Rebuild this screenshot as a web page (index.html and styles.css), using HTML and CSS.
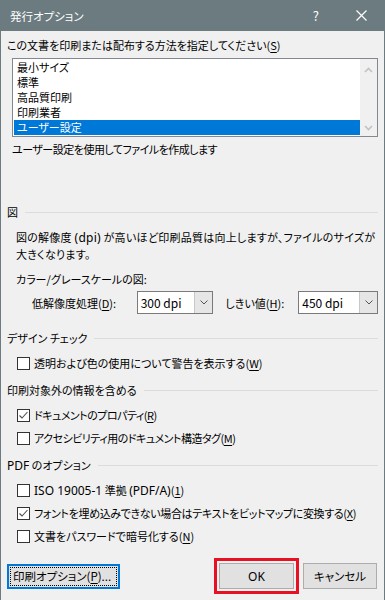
FILE: index.html
```html
<!DOCTYPE html>
<html>
  <head>
    <title>発行オプション</title>
    <link rel="stylesheet" href="styles.css">
  </head>
  <body>
    <div class="dialog">
      <div class="titlebar">
        <span class="title">発行オプション</span>
        <span class="help">?</span>
        <svg class="close" width="11" height="11" viewBox="0 0 11 11">
          <path d="M0.5 0.5 L10.5 10.5 M10.5 0.5 L0.5 10.5" stroke="#fff" stroke-width="1.2" fill="none" />
        </svg>
      </div>

      <div class="content">
        <div class="prompt">この文書を印刷または配布する方法を指定してください(<u>S</u>)</div>
        <div class="listbox">
          <ul class="items">
            <li>最小サイズ</li>
            <li>標準</li>
            <li>高品質印刷</li>
            <li>印刷業者</li>
            <li class="selected">ユーザー設定</li>
          </ul>
          <div class="scrollbar">
            <svg width="9" height="6" viewBox="0 0 9 6"><path d="M1 5 L4.5 1.5 L8 5" stroke="#c2c2c2" stroke-width="1.6" fill="none" /></svg>
            <svg width="9" height="6" viewBox="0 0 9 6"><path d="M1 1 L4.5 4.5 L8 1" stroke="#c2c2c2" stroke-width="1.6" fill="none" /></svg>
          </div>
        </div>
        <div class="desc">ユーザー設定を使用してファイルを作成します</div>

        <!-- 図 -->
        <div class="group-head first"><span>図</span></div>
        <p class="note">図の解像度 <span class="lat">(dpi)</span> が高いほど印刷品質は向上しますが、ファイルのサイズが<br>大きくなります。</p>
        <div class="sub">カラー/グレースケールの図:</div>
        <div class="res-row">
          <span class="res-label">低解像度処理(<u>D</u>):</span>
          <div class="select sel-a">
            <span class="value">300 dpi</span>
            <span class="arrow">
              <svg width="8" height="5" viewBox="0 0 8 5"><path d="M0.5 0.5 L4 4 L7.5 0.5" stroke="#555" stroke-width="1" fill="none" /></svg>
            </span>
          </div>
          <span class="res-label lbl-b">しきい値(<u>H</u>):</span>
          <div class="select sel-b">
            <span class="value">450 dpi</span>
            <span class="arrow">
              <svg width="8" height="5" viewBox="0 0 8 5"><path d="M0.5 0.5 L4 4 L7.5 0.5" stroke="#555" stroke-width="1" fill="none" /></svg>
            </span>
          </div>
        </div>

        <!-- デザイン チェック -->
        <div class="group-head design"><span>デザイン チェック</span></div>
        <label class="check first-check"><span class="box"></span>透明および色の使用について警告を表示する(<u>W</u>)</label>

        <!-- 印刷対象外 -->
        <div class="group-head"><span>印刷対象外の情報を含める</span></div>
        <label class="check first-check">
          <span class="box">
            <svg width="11" height="11" viewBox="0 0 11 11"><path d="M1.5 5.5 L4 8 L9.5 2" stroke="#4d4d4d" stroke-width="1.1" fill="none" /></svg>
          </span><span class="narrow">ドキュメントのプロパティ(<u>R</u>)</span>
        </label>
        <label class="check"><span class="box"></span><span class="narrow">アクセシビリティ用のドキュメント構造タグ(<u>M</u>)</span></label>

        <!-- PDF -->
        <div class="group-head"><span><span class="lat">PDF</span> のオプション</span></div>
        <label class="check first-check"><span class="box"></span><span><span class="lat">ISO 19005-1</span> 準拠 <span class="lat">(PDF/A)</span>(<u>1</u>)</span></label>
        <label class="check">
          <span class="box">
            <svg width="11" height="11" viewBox="0 0 11 11"><path d="M1.5 5.5 L4 8 L9.5 2" stroke="#4d4d4d" stroke-width="1.1" fill="none" /></svg>
          </span><span class="narrow-s">フォントを埋め込みできない場合はテキストをビットマップに変換する(<u>X</u>)</span>
        </label>
        <label class="check"><span class="box"></span>文書をパスワードで暗号化する(<u>N</u>)</label>
      </div>

      <div class="buttons">
        <button class="btn btn-options"><span class="focus">印刷オプション(<u>P</u>)...</span></button>
        <div class="right-buttons">
          <button class="btn btn-ok"><span class="lat">OK</span></button>
          <button class="btn btn-cancel">キャンセル</button>
        </div>
      </div>
    </div>
  </body>
</html>
```

FILE: styles.css
```css
body {
  margin: 0;
  font-family: "Noto Sans CJK JP", sans-serif;
  font-size: 11px;
  font-feature-settings: "palt";
  color: #000;
  background: #f0f0f0;
}
u {
  text-decoration-thickness: 1px;
  text-underline-offset: 2px;
}
.lat {
  font-family: "Noto Sans", sans-serif;
  font-size: 12px;
  line-height: 0;
}
.narrow {
  letter-spacing: -0.5px;
}
.narrow-s {
  letter-spacing: -0.35px;
}
.dialog {
  box-sizing: border-box;
  width: 385px;
  height: 600px;
  background: #f0f0f0;
  border-left: 1px solid #6c7b7f;
  border-right: 1px solid #6c7b7f;
  overflow: hidden;
}

/* title bar */
.titlebar {
  height: 31px;
  background: #6c7b7f;
  color: #fff;
  display: flex;
  align-items: center;
  margin: 0 -1px;
}
.title {
  margin-left: 10px;
  font-size: 11.5px;
  flex: 1;
}
.help {
  font-size: 13px;
  margin-right: 37px;
}
.close {
  margin-right: 18px;
}

.content {
  padding: 0 6px;
  line-height: 16px;
}
.prompt {
  margin-top: 6px;
}

/* list */
.listbox {
  box-sizing: border-box;
  height: 79px;
  margin: 5px 0 0 5px;
  border: 1px solid #828790;
  background: #fff;
  display: flex;
}
.items {
  list-style: none;
  margin: 0;
  padding: 1px 0 0 1px;
  flex: 1;
  line-height: 15px;
}
.items li {
  height: 15px;
  padding-left: 3px;
}
.items li.selected {
  background: #0078d7;
  color: #fff;
}
.scrollbar {
  width: 17px;
  background: #f0f0f0;
  display: flex;
  flex-direction: column;
  justify-content: space-between;
  align-items: center;
  padding: 8px 0 5px;
}
.desc {
  margin: 4px 0 0 5px;
  letter-spacing: -0.5px;
}

/* groups */
.group-head {
  display: flex;
  align-items: center;
  margin-top: 11px;
}
.group-head.first {
  margin-top: 47px;
}
.group-head.design {
  margin-top: 16px;
}
.group-head::after {
  content: "";
  flex: 1;
  height: 1px;
  background: #dcdcdc;
  margin-left: 7px;
}
.note {
  margin: 9px 0 0;
  padding-left: 9px;
  line-height: 17px;
  letter-spacing: 0.25px;
}
.sub {
  margin-top: 8px;
  padding-left: 9px;
}
.res-row {
  display: flex;
  align-items: center;
  margin-top: 4px;
  padding-left: 25px;
}
.res-label {
  width: 105px;
}
.res-label.lbl-b {
  width: 73px;
  margin-left: 12px;
}
.select {
  box-sizing: border-box;
  height: 23px;
  border: 1px solid #7a7a7a;
  background: #fff;
  display: flex;
}
.sel-a {
  width: 77px;
}
.sel-b {
  width: 80px;
}
.select .value {
  flex: 1;
  padding-left: 3px;
  line-height: 21px;
  font-size: 12px;
}
.select .arrow {
  width: 17px;
  background: #e6e6e6;
  border-left: 1px solid #c8c8c8;
  display: flex;
  align-items: center;
  justify-content: center;
}

/* checkboxes */
.check {
  display: flex;
  align-items: center;
  height: 16px;
  padding-left: 10px;
  margin-top: 7px;
}
.check.first-check {
  margin-top: 9px;
}
.box {
  box-sizing: border-box;
  width: 13px;
  height: 13px;
  border: 1px solid #333;
  background: #fff;
  margin-right: 4px;
  display: flex;
  align-items: center;
  justify-content: center;
}

/* buttons */
.buttons {
  display: flex;
  justify-content: space-between;
  align-items: center;
  padding: 0 7px 0 6px;
  margin-top: 19px;
}
.right-buttons {
  display: flex;
  gap: 9px;
}
.btn {
  box-sizing: border-box;
  height: 26px;
  background: #e1e1e1;
  border: 1px solid #adadad;
  font-family: "Noto Sans CJK JP", sans-serif;
  font-size: 11.5px;
  font-feature-settings: "palt";
  color: #000;
  padding: 0;
}
.btn-options {
  width: 113px;
  height: 25px;
  border: 2px solid #0078d7;
  padding: 1px;
}
.btn-options .focus {
  display: block;
  height: 100%;
  box-sizing: border-box;
  border: 1px dotted #000;
  line-height: 17px;
  text-align: left;
  padding-left: 2px;
}
.btn-ok {
  width: 75px;
  outline: 3px solid #e81123;
  outline-offset: 2px;
}
.btn-cancel {
  width: 74px;
}
```
